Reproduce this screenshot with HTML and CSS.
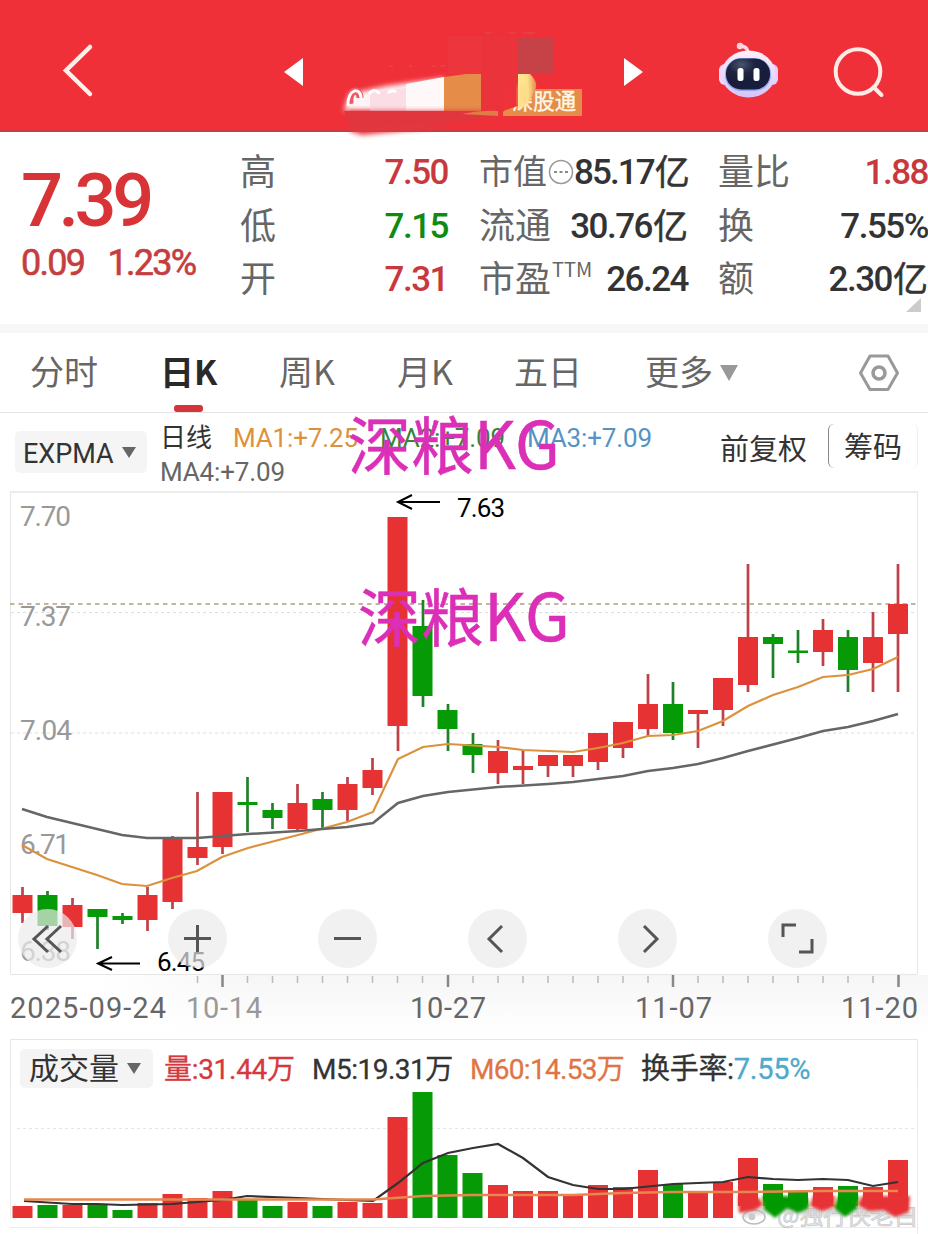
FILE: index.html
```html
<!DOCTYPE html>
<html lang="zh-CN">
<head>
<meta charset="utf-8">
<title>日K</title>
<link rel="stylesheet" href="styles.css">
</head>
<body>
<header class="topbar">
  <svg class="back" viewBox="62 0 32 132"><path d="M90 47L66 70.500L90 94" fill="none" stroke="#fff0ec" stroke-width="4.500" stroke-linecap="round"/></svg>
  <svg class="prev" viewBox="284 0 20 132"><path d="M284 72L303 58V86Z" fill="#fff"/></svg>
  <svg class="title" viewBox="338 0 252 132">
    <defs>
      <filter id="soft" x="-20%" y="-40%" width="140%" height="180%"><feGaussianBlur stdDeviation="2.500"/></filter>
      <linearGradient id="fade"><stop offset="0" stop-color="#ffe88e"/><stop offset=".5" stop-color="#ffe08c"/><stop offset="1" stop-color="#e58c49"/></linearGradient>
    </defs>
    <path d="M448 36H482V74H448Z" fill="#ec353d"/><path d="M482 36H518V110H482Z" fill="#eb333b"/>
    <path d="M518 38H554V73H518Z" fill="#c74246"/>
    <path d="M389 66h4m16 0h3m20 0h4m4 0h6M486 33h5m18 0h7m7 0h12" stroke="#e0454a" stroke-width="1.500"/>
    <path d="M344 111L349 94L386 86L444 78V111Z" fill="#fff3f5" filter="url(#soft)"/>
    <path d="M370 92L406 88V111H370Z" fill="#fbdde5"/><path d="M406 84L444 77V111H406Z" fill="#fff8f8"/>
    <path d="M350 104C348 88 360 88 360 98" fill="none" stroke="#ef5a62" stroke-width="7"/>
    <path d="M348 106C347 88 361 87 361 98M369 94C373 89 378 90 379 94M388 93Q392 89 396 92" fill="none" stroke="#fff" stroke-width="3"/>
    <path d="M444 77L466 74H481V111H444Z" fill="#e58c49"/>
    <path d="M348 111H500V114L430 128L362 135L350 131Z" fill="#e0373f" filter="url(#soft)"/>
    <path d="M344 111H480V120L350 128Z" fill="#e2363e"/>
    <path d="M462 114Q480 110 498 111V116Z" fill="#e07c45"/>
    <path d="M503 112L522 89H582V116H503Z" fill="#e58c49"/>
    <text x="512" y="109" textLength="64" lengthAdjust="spacingAndGlyphs" class="badge">深股通</text>
    <path d="M503 86H518V106L503 111Z" fill="#ee333b"/>
    <path d="M518 74H530C536 80 539 87 533 93C531 102 524 107 518 108Z" fill="url(#fade)"/>
    <path d="M519 85H530L526 103L519 108Z" fill="#fddc8c" filter="url(#soft)"/>
  </svg>
  <svg class="next" viewBox="624 0 20 132"><path d="M643 72L624 58V86Z" fill="#fff"/></svg>
  <svg class="robot" viewBox="718 0 60 132">
    <defs>
      <linearGradient id="shell" x1="0" y1="0" x2="0" y2="1"><stop offset="0" stop-color="#fff0f7"/><stop offset="1" stop-color="#d6c4fa"/></linearGradient>
      <radialGradient id="face" cx=".35" cy=".2"><stop offset="0" stop-color="#48556f"/><stop offset=".6" stop-color="#1e2440"/><stop offset="1" stop-color="#171d3b"/></radialGradient>
    </defs>
    <path d="M740 46Q747 46 748 52" fill="none" stroke="#ffd5e0" stroke-width="3.500"/><circle cx="740" cy="46" r="3.200" fill="#ffd5e0"/>
    <rect x="719" y="64" width="12" height="21" rx="6" fill="#f5d6ff"/><rect x="766" y="64" width="12" height="21" rx="6" fill="#e8cfff"/>
    <ellipse cx="748.500" cy="74" rx="27" ry="23.500" fill="url(#shell)"/>
    <rect x="725" y="58" width="46" height="33" rx="16" fill="#8fa7f5"/>
    <rect x="726" y="58.500" width="44" height="31" rx="15" fill="url(#face)"/>
    <rect x="737.500" y="68" width="6" height="13" rx="2.500" fill="#fff"/><rect x="753.500" y="68" width="6" height="13" rx="2.500" fill="#fff"/>
  </svg>
  <svg class="search" viewBox="832 0 54 132"><circle cx="858" cy="71.500" r="22.300" fill="none" stroke="#ffeae6" stroke-width="4"/><path d="M873.500 87L881.500 95" stroke="#ffeae6" stroke-width="4" stroke-linecap="round"/></svg>
</header>

<section class="quote">
  <div class="price">
    <div class="last">7.39</div>
    <div class="change"><span>0.09</span><span>1.23%</span></div>
  </div>
  <dl class="stats">
    <div><dt>高</dt><dd class="up">7.50</dd></div>
    <div><dt>低</dt><dd class="down">7.15</dd></div>
    <div><dt>开</dt><dd class="up">7.31</dd></div>
  </dl>
  <dl class="stats">
    <div><dt class="tight">市值<svg class="dots" viewBox="0 0 26 26"><circle cx="13" cy="13" r="11.500" fill="none" stroke="#999" stroke-width="1.500"/><path d="M6 13h3m2.500 0h3m2.500 0h3" stroke="#888" stroke-width="2"/></svg></dt><dd>85.17<i>亿</i></dd></div>
    <div><dt>流通</dt><dd>30.76<i>亿</i></dd></div>
    <div><dt>市盈<sup>TTM</sup></dt><dd>26.24</dd></div>
  </dl>
  <dl class="stats">
    <div><dt>量比</dt><dd class="up">1.88</dd></div>
    <div><dt>换</dt><dd>7.55%</dd></div>
    <div><dt>额</dt><dd>2.30<i>亿</i></dd></div>
  </dl>
  <span class="corner"></span>
</section>

<nav class="tabs">
  <span class="t1">分时</span><span class="t2 active">日K</span><span class="t3">周K</span><span class="t4">月K</span><span class="t5">五日</span><span class="t6">更多</span><i class="caret"></i>
  <svg class="gear" viewBox="0 0 42 42"><path d="M12 4H30L39.500 21L30 37.500H12L2.500 21Z" fill="none" stroke="#999" stroke-width="3" stroke-linejoin="round"/><circle cx="21" cy="21" r="6" fill="none" stroke="#999" stroke-width="3.500"/></svg>
</nav>

<section class="legend">
  <div class="picker"><span>EXPMA</span><i class="caret small"></i></div>
  <div class="averages">
    <div class="line"><span class="name">日线</span><span class="ma1">MA1:+7.25</span><span class="ma2">MA2:+7.09</span><span class="ma3">MA3:+7.09</span></div>
    <div class="line ma4">MA4:+7.09</div>
  </div>
  <span class="adjust">前复权</span>
  <span class="chips">筹码</span>
  <span class="stamp first">深粮<b>KG</b></span>
</section>

<section class="kline">
  <svg class="chart" viewBox="0 491 928 548">
    <defs><linearGradient id="shade" x1="0" y1="0" x2="0" y2="1"><stop offset="0" stop-color="#f6f6f6"/><stop offset="1" stop-color="#fff"/></linearGradient>
    <linearGradient id="side"><stop offset="0" stop-color="#fff"/><stop offset="1" stop-color="#fff" stop-opacity="0"/></linearGradient></defs>
    <path d="M100 975H928V1036H100Z" fill="url(#shade)"/><path d="M99 975H260V1037H99Z" fill="url(#side)"/>
    <path d="M10 492H918" stroke="#ededed" stroke-width="2"/><path d="M10.500 492V974.500H917.500V492" fill="none" stroke="#e6e6e6"/>
    <path d="M11 612.500H917M11 733H917" stroke="#dedede" stroke-dasharray="3 3"/>
    <path d="M10 604H917" stroke="#aaa080" stroke-width="1.500" stroke-dasharray="4.500 4"/>
    <g class="scale">
      <text x="20" y="526" textLength="51">7.70</text><text x="20" y="626" textLength="51">7.37</text><text x="20" y="740" textLength="52">7.04</text><text x="20" y="854" textLength="50">6.71</text><text x="20" y="961" textLength="51">6.38</text>
    </g>
    <g fill="none">
      <path class="wick-up" d="M22.500 887V923M72.500 898V939M147.500 887V931M172.500 836V909M197.500 792V865M222.500 792V854M297.500 784V831M347.500 777V821M372.500 758V795M398 517V751M498 740V784M523 750V784M548 755V777M573 755V777M598 733V770M623 722V758M648 674V736M698 710V748M723 678V726M748 564V692M823 619V666M873 612V692M898 564V692"/>
      <path class="wick-down" d="M47.500 891V930M97.500 909V949M122.500 913V924M247.500 777V832M272.500 803V829M322.500 792V829M423 600V707M448 704V751M473 733V773M673 682V740M773 634V678M798 630V663M848 630V692"/>
      <path class="body-up" d="M22.500 895V913M72.500 905V927M147.500 895V920M172.500 839V902M197.500 847V858M222.500 792V847M297.500 803V829M347.500 784V810M372.500 770V788M397.500 517V726M498 751V773M523 766V770M548 755V766M573 755V766M598 733V762M623 722V748M648 704V729M698 710V714M723 678V710M748 637V685M823 630V652M873 637V663M898 604V634"/>
      <path class="body-down" d="M47.500 895V926M97.500 909V917M122.500 916V920M247.500 802V805M272.500 810V818M322.500 799V810M422.500 626V696M447.500 710V729M472.500 744V755M673 704V733M773 637V644M798 650.500V653M848 637V670"/>
      <path d="M22 845L47 859L97 875L122 884L147 886L172 878L197 871L222 857L248 848L298 835L347 822L373 812L398 759L423 747L448 744L498 747L523 750L573 752L598 748L623 743L648 736L673 735L698 731L723 721L748 706L773 695L798 687L823 677L848 675L873 669L898 657" stroke="#dc913c" stroke-width="2.200"/>
      <path d="M22 809L47 817L97 829L122 835L147 838H197L248 834L298 831L347 827L373 823L398 803L423 796L448 792L498 787L548 784L573 782L623 776L648 771L673 768L698 764L723 758L748 751L798 738L823 731L848 727L873 721L898 714" stroke="#666" stroke-width="2.500"/>
      <path d="M440 502H398M412 495L398 502L412 509M140 963.500H98M112 957L98 963.500L112 970" stroke="#000" stroke-width="2"/>
    </g>
    <g class="mark"><text x="457" y="517" textLength="48">7.63</text><text x="157" y="971" textLength="48">6.45</text></g>
    <path d="M197.500 976V983M247.500 976V983M272.500 976V983M297.500 976V983M322.500 976V983M347.500 976V983M372.500 976V983M397.500 976V983M422.500 976V983M473 976V983M498 976V983M523 976V983M548 976V983M573 976V983M598 976V983M623 976V983M648 976V983M698 976V983M723 976V983M748 976V983M773 976V983M798 976V983M823 976V983M848 976V983M873 976V983" stroke="#bbb" stroke-width="1.500"/>
    <path d="M222.500 975V987M448 975V987M673 975V987M898.500 975V987" stroke="#888" stroke-width="2.500"/>
    <g class="dates"><text x="10" y="1018" textLength="156">2025-09-24</text><text x="186" y="1018" textLength="76" class="dim">10-14</text><text x="410" y="1018" textLength="76">10-27</text><text x="635" y="1018" textLength="77">11-07</text><text x="841" y="1018" textLength="77">11-20</text></g>
  </svg>
  <div class="controls">
    <button><svg viewBox="0 0 59 59"><path d="M30 17L16 30L30 43M43 17L29 30L43 43"/></svg></button>
    <button><svg viewBox="0 0 59 59"><path d="M16 29.500H43M29.500 16V43"/></svg></button>
    <button><svg viewBox="0 0 59 59"><path d="M16 29.500H43"/></svg></button>
    <button><svg viewBox="0 0 59 59"><path d="M34 17L21 30L34 43"/></svg></button>
    <button><svg viewBox="0 0 59 59"><path d="M26 17L39 30L26 43"/></svg></button>
    <button><svg viewBox="0 0 59 59"><path d="M15 28V16H28M31 43H44V30"/></svg></button>
  </div>
  <span class="stamp second">深粮<b>KG</b></span>
</section>

<section class="volume">
  <div class="vol-head">
    <div class="vol-picker"><span>成交量</span><i class="caret small"></i></div>
    <span class="v1">量:31.44万</span><span class="v2">M5:19.31万</span><span class="v3">M60:14.53万</span><span class="v4">换手率:<b>7.55%</b></span>
  </div>
  <svg class="bars" viewBox="0 1089 928 145">
    <defs><filter id="smear" x="-10%" y="-30%" width="120%" height="160%"><feGaussianBlur stdDeviation="1.500"/></filter></defs>
    <path d="M10.500 1089V1218M917.500 1089V1234M10 1227.500H918" stroke="#ececec"/>
    <path d="M17 1128.500H917" stroke="#e5e5e5" stroke-dasharray="3 3"/>
    <g fill="none">
      <path class="body-up" d="M22.500 1206V1218M72.500 1205V1218M147.500 1203V1218M172.500 1194V1218M197.500 1198V1218M222.500 1191V1218M297.500 1202V1218M347.500 1202V1218M372.500 1203V1218M397.500 1117V1218M498 1185V1218M523 1191V1218M548 1191V1218M573 1194V1218M598 1185V1218M623 1187V1218M648 1170V1218M698 1192V1218M723 1182V1218M748 1158V1206M823 1187V1206M873 1187V1206M898 1160V1210"/>
      <path class="body-down" d="M47.500 1205V1218M97.500 1205V1218M122.500 1210V1218M247.500 1200V1218M272.500 1206V1218M322.500 1206V1218M422.500 1092V1218M447.500 1155V1218M472.500 1173V1218M673 1184V1218M773 1184V1206M798 1192V1206M848 1186V1206"/>
    </g>
    <path d="M742 1214Q780 1205 812 1213Q860 1208 912 1216" fill="none" stroke="#ddd" stroke-width="8" filter="url(#smear)"/>
    <g class="watermark"><ellipse cx="754" cy="1217" rx="11" ry="7" fill="none" stroke="#bbb" stroke-width="1.500"/><circle cx="752" cy="1217" r="3" fill="#ccc"/><text x="777" y="1224" textLength="141">@独行侠老白</text></g>
    <g filter="url(#smear)">
      <path d="M738 1196L759 1198L763 1205L755 1210L739 1213ZM813 1196H835L834 1207L822 1211L810 1206ZM862 1196H910L909 1212L895 1217L884 1210L869 1211L858 1205Z" fill="#e73234"/>
      <path d="M762 1196H785L808 1198L809 1208L798 1213L787 1208L775 1218L764 1209ZM838 1196H859L857 1208L845 1217L834 1208Z" fill="#069a06"/>
    </g>
    <path d="M24 1201L72 1204L97 1204L122 1205L172 1204L222 1200L247 1196L298 1198L347 1200L373 1201L398 1183L423 1163L448 1153L473 1148L498 1144L523 1158L548 1177L573 1185L598 1189H623L673 1184L723 1182L748 1177L773 1179L798 1180L823 1179L848 1180L873 1186L898 1182" fill="none" stroke="#333" stroke-width="2.200"/>
    <path d="M24 1199.500H373L423 1196L473 1195H573L623 1193L673 1192H748L823 1191H898" fill="none" stroke="#e7874f" stroke-width="2.500"/>
  </svg>
</section>
</body>
</html>
```
FILE: styles.css
```css
* { box-sizing: border-box; }
body { margin: 0; width: 928px; height: 1234px; overflow: hidden; background: #fff; color: #333; font-family: "Noto Sans CJK SC", sans-serif; }
svg { display: block; flex: none; }
i { font-style: normal; }

.topbar { display: flex; height: 132px; padding-left: 62px; background: #f03039; border-bottom: 2px solid #c63d43; }
.topbar svg { height: 132px; overflow: visible; position: relative; z-index: 1; }
.back { width: 32px; }
.prev { width: 20px; margin-left: 190px; }
.title { width: 252px; margin-left: 34px; }
.next { width: 20px; margin-left: 34px; }
.robot { width: 60px; margin-left: 74px; }
.search { width: 54px; margin-left: 54px; }
.badge { font-size: 22px; fill: #fff6e5; stroke: #fff6e5; stroke-width: .4; }

.quote { position: relative; display: grid; grid-template-columns: 210px 209px 209px 209px; column-gap: 30px; height: 201px; padding-top: 13px; border-bottom: 9px solid #f7f7f7; }
.price { padding: 12px 0 0 21px; color: #d83336; font-family: Roboto, sans-serif; font-weight: 500; }
.last { font-size: 74px; line-height: 88px; letter-spacing: -4.500px; }
.change { display: flex; gap: 23px; font-size: 36px; line-height: 36px; letter-spacing: -1.700px; font-weight: 400; -webkit-text-stroke: .6px; color: #c63d40; }
.stats { margin: 0; }
.stats div { display: flex; justify-content: space-between; align-items: center; height: 53.500px; }
dt { display: flex; margin-top: -4px; font-size: 36px; line-height: 53px; color: #666; white-space: nowrap; }
dt.tight { font-size: 34px; align-items: center; }
dd { display: flex; margin: 2px 0 0; font-family: Roboto, "Noto Sans CJK SC", sans-serif; font-size: 35px; line-height: 53px; letter-spacing: -1.900px; font-weight: 500; white-space: nowrap; }
dt:not(.tight) + dd { letter-spacing: -1.500px; }
dd i { margin: -3px 0 0 1px; font-family: "Noto Sans CJK SC", sans-serif; font-size: 35px; font-weight: 400; letter-spacing: 0; -webkit-text-stroke: .5px; }
.up { color: #c8393e; }
.down { color: #0f8b12; }
.stats .up, .stats .down { margin-right: 1px; }
.stats:nth-child(4) dd { margin-right: -1px; }
.dots { width: 26px; height: 26px; margin: 4px 0 0 1px; }
sup { margin: -8px 0 0 1px; font-size: 20px; }
.corner { position: absolute; left: 906px; top: 166px; border-left: 15px solid transparent; border-bottom: 14px solid #ccc; }

.tabs { display: flex; align-items: center; height: 80px; padding-left: 30px; border-bottom: 1px solid #e3e3e3; font-size: 34px; line-height: 76px; color: #666; }
.tabs span { margin-top: -3px; white-space: nowrap; }
.t1 { width: 130px; }
.t2 { position: relative; width: 119px; }
.t3 { width: 118px; }
.t4 { width: 117px; }
.t5 { width: 131px; }
.t6 { width: 75px; }
.active { color: #292929; font-weight: 700; }
.active::after { content: ""; position: absolute; left: 14px; bottom: -3px; width: 29px; height: 7px; border-radius: 3px; background: #d5343a; }
.caret { border: 9px solid transparent; border-top: 16px solid #999; border-bottom: 0; }
.gear { width: 42px; height: 42px; margin-left: 120px; }

.legend { position: relative; display: flex; height: 78px; padding-left: 15px; }
.picker { display: flex; align-items: center; gap: 8px; width: 132px; height: 42px; margin-top: 18px; padding: 3px 0 0 8px; border-radius: 5px; background: #f5f5f5; font-family: Roboto, sans-serif; font-size: 27px; letter-spacing: 0; }
.caret.small { margin-top: -3px; border-width: 11px 7.500px 0; border-top-color: #666; }
.averages { width: 560px; padding: 8px 0 0 13px; font-family: Roboto, "Noto Sans CJK SC", sans-serif; font-size: 26px; }
.line { display: flex; height: 34px; line-height: 34px; letter-spacing: -.150px; white-space: nowrap; }
.name { width: 73px; letter-spacing: 0; }
.ma1, .ma2 { width: 147px; }
.ma1 { color: #dc913c; }
.ma2 { color: #378337; }
.ma3 { color: #5592c5; }
.ma4 { color: #666; }
.adjust { width: 108px; margin-left: 13px; padding-top: 13px; font-size: 29px; line-height: 42px; }
.chips { width: 90px; height: 44px; margin-top: 11px; border-left: 1px solid #888; border-right: 1px solid #eee; border-radius: 6px; text-align: center; font-size: 29px; line-height: 43px; }
.stamp { position: absolute; z-index: 2; color: #db2fb7; font-size: 63px; line-height: 80px; white-space: nowrap; -webkit-text-stroke: .5px; }
.stamp b { font-weight: 400; font-size: 65px; letter-spacing: .500px; }
.first { left: 348px; top: -12px; }
.second { left: 358px; top: 82px; }

.kline { position: relative; height: 548px; }
.chart { width: 928px; height: 548px; }
.scale { font: 28px Roboto, sans-serif; fill: #999; }
.mark { font: 26px Roboto, sans-serif; fill: #000; }
.dates { font: 29px Roboto, sans-serif; fill: #666; }
.dates .dim { fill: #999; }
.wick-up { stroke: #bd4147; stroke-width: 2.700; }
.wick-down { stroke: #21802a; stroke-width: 2.700; }
.body-up { stroke: #e73234; stroke-width: 20; }
.body-down { stroke: #069a06; stroke-width: 20; }
.controls { position: absolute; left: 17.500px; top: 417.500px; display: flex; gap: 91.100px; }
button { width: 59px; height: 59px; padding: 0; border: 0; border-radius: 50%; background: rgba(235, 235, 235, .7); }
button path { fill: none; stroke: #555; stroke-width: 3; }

.volume { height: 195px; }
.vol-head { display: flex; height: 50px; margin: 0 10px; padding: 10px 0 0 9px; border: 1px solid #e6e6e6; border-bottom: 0; font-family: Roboto, "Noto Sans CJK SC", sans-serif; font-size: 28px; line-height: 39px; letter-spacing: -.300px; white-space: nowrap; -webkit-text-stroke: .3px; }
.vol-picker { display: flex; align-items: center; gap: 8px; width: 133px; height: 39px; margin-top: -1px; padding-left: 9px; border-radius: 5px; background: #f4f4f4; font-size: 30px; letter-spacing: 0; -webkit-text-stroke: 0; }
.vol-picker .small { margin-top: 0; }
.v1 { width: 148px; margin-left: 11px; color: #d5393d; }
.v2 { width: 158px; letter-spacing: -.500px; }
.v3 { width: 171px; letter-spacing: -.700px; color: #df7544; }
.v4 { font-size: 29px; }
.v4 b { font-weight: 400; color: #4fa9cd; }
.bars { width: 928px; height: 145px; }
.watermark { font-size: 24px; fill: #e4e4e4; stroke: #bbb; stroke-width: .5; }
```
